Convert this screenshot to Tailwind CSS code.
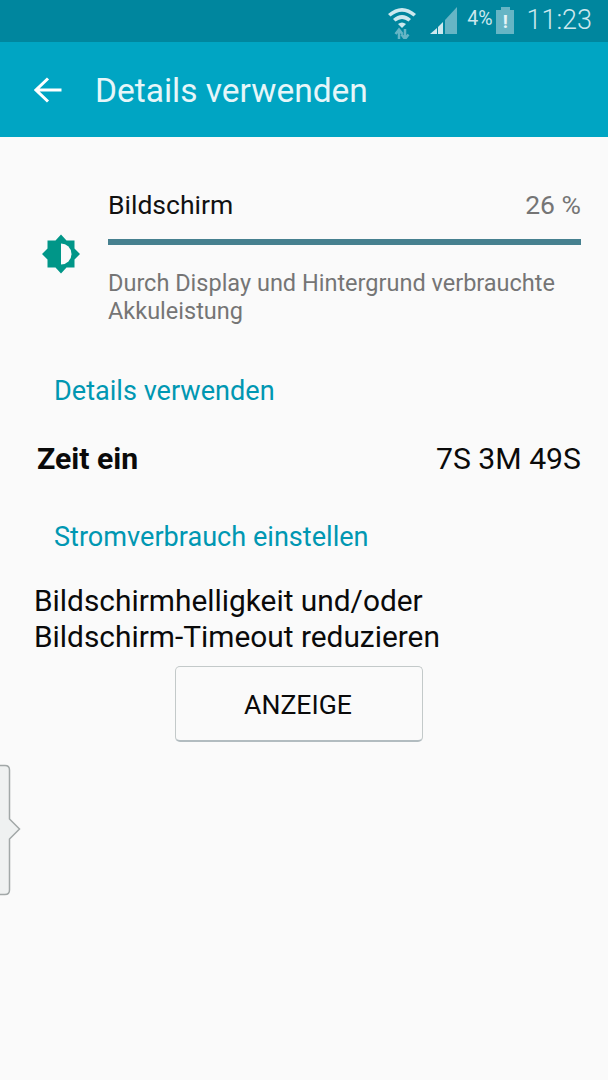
<!doctype html>
<html><head><meta charset="utf-8"><script src="https://cdn.jsdelivr.net/npm/@tailwindcss/browser@4"></script></head>
<body class="m-0">
<div class="relative w-[608px] h-[1080px] bg-[#fafafa] overflow-hidden font-['Roboto',sans-serif]">
  <div class="h-[42px] bg-[#00869e] flex items-center justify-end pr-[16px] text-[#b5dde5]">
    <svg class="w-[30px] h-[36px] mr-[13px] ml-auto" viewBox="0 0 30 36"><path d="M1 11 Q15 -1 29 11 L26.500 13.500 Q15 4 3.500 13.500Z M6 16 Q15 8 24 16 L21.500 18.500 Q15 13.500 8.500 18.500Z" fill="#cde8ee"/><path d="M11 21 Q15 18 19 21 L15 25Z" fill="#cde8ee"/><path d="M12 36V27M8.500 31l3.500-4.500 3.500 4.500M18 26v9M14.500 31.500l3.500 4.500 3.500-4.500" stroke="#66b5c5" stroke-width="2.500" fill="none"/></svg>
    <svg class="w-[28px] h-[28px] mr-[9px] mt-[-2px]" viewBox="0 0 28 28"><path d="M0 28 L7 22V28Z" fill="#cde8ee"/><path d="M8 28V21L13 16V28Z" fill="#cde8ee"/><path d="M15 28V14L27 1V28Z" fill="#66b5c5"/></svg>
    <span class="text-[19.500px] mr-[4px] mt-[-4px] text-[#cde8ee]">4%</span>
    <div class="relative w-[18px] h-[27px] mr-[12px] mt-[-2px]">
      <div class="w-[9px] h-[3px] bg-[#66b5c5] mx-auto"></div>
      <div class="w-[18px] h-[24px] bg-[#66b5c5] flex items-center justify-center text-[#e6f4f7] text-[19px] font-bold leading-none">!</div>
    </div>
    <span class="text-[27px] font-light mt-[-2px] leading-none text-[#cde8ee]">11:23</span>
  </div>
  <div class="h-[95px] bg-[#00a5c3] flex items-center pl-[34px] text-white">
    <svg class="w-[28px] h-[26px] mr-[33px]" viewBox="0 0 28 26"><path d="M27.500 13H2M14 1.500 2 13l12 11.500" fill="none" stroke="#fff" stroke-width="3"/></svg>
    <span class="text-[33.500px] leading-none mt-[2px] text-[#e6f6f9]">Details verwenden</span>
  </div>

  <div class="flex items-center pt-[50px] pl-[41px] pr-[27px]">
    <svg class="w-[40px] h-[40px] mr-[27px] mt-[-4px] shrink-0" viewBox="0 0 40 40"><path d="M20 0.500 25.500 6.500H33.500V14.500L39 20 33.500 25.500V33.500H25.500L20 39.500 14.500 33.500H6.500V25.500L1 20 6.500 14.500V6.500H14.500Z" fill="#009688"/><path d="M20 9.500A10.500 10.500 0 0 1 20 30.500Z" fill="#fafafa"/></svg>
    <div class="flex-1">
      <div class="flex justify-between items-baseline text-[26.500px] leading-[36px]">
        <span class="text-[#111]">Bildschirm</span><span class="text-[#757575]">26 %</span>
      </div>
      <div class="h-[6px] bg-[#46808f] mt-[16px]"></div>
      <p class="text-[23.500px] leading-[28px] text-[#757575] mt-[24px]">Durch Display und Hintergrund verbrauchte Akkuleistung</p>
    </div>
  </div>

  <div class="pl-[54px] text-[27.100px] leading-[36px] text-[#0097b2] mt-[48px]">Details verwenden</div>
  <div class="flex justify-between items-center pl-[37px] pr-[27px] mt-[32px] text-[30.200px] leading-[36px] text-[#0a0a0a]">
    <span class="font-bold">Zeit ein</span><span>7S 3M 49S</span>
  </div>
  <div class="pl-[54px] text-[27.100px] leading-[36px] text-[#0097b2] mt-[42px]">Stromverbrauch einstellen</div>
  <p class="pl-[34px] text-[29.850px] leading-[36px] text-[#0a0a0a] mt-[28px]">Bildschirmhelligkeit und/oder<br>Bildschirm-Timeout reduzieren</p>
  <div class="ml-[175px] mt-[11px] w-[248px] h-[76px] pt-[3px] pr-[2px] rounded-[5px] border border-[#c3c9c9] border-b-2 border-b-[#b2bcc0] flex items-center justify-center text-[26.600px] text-[#0a0a0a]">ANZEIGE</div>

  <svg class="absolute left-0 top-[764px]" width="22" height="132" viewBox="0 0 22 132"><path d="M-2 1.500H5Q9.500 1.500 9.500 6V55L19.500 65 9.500 75V126Q9.500 130.500 5 130.500H-2Z" fill="#eff1f1" stroke="#a2a8a8" stroke-width="1.500"/></svg>
</div>
</body></html>
